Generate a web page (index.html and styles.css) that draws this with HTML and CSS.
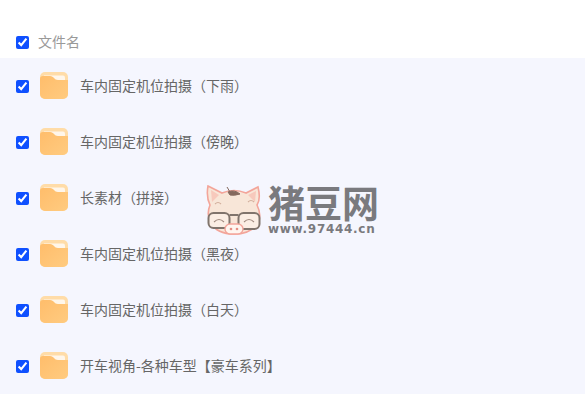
FILE: index.html
```html
<!DOCTYPE html>
<html lang="zh-CN">
<head>
    <meta charset="UTF-8">
    <title>文件列表</title>
    <link rel="stylesheet" href="styles.css">
</head>
<body>
    <svg class="defs" width="0" height="0">
        <defs>
            <linearGradient id="folderBody" x1="0" y1="0" x2="1" y2="1">
                <stop offset="0" stop-color="#ffbd6b"/>
                <stop offset="1" stop-color="#ffcb80"/>
            </linearGradient>
            <symbol id="folder" viewBox="0 0 28 28">
                <rect x="0" y="0" width="28" height="27" rx="5" fill="#ffdca8"/>
                <path d="M4 3.5h19a2 2 0 0 1 2 2V8H4z" fill="#fff6ea"/>
                <path d="M0 7a3 3 0 0 1 3-3h7c2 0 3 1 4 2s2 2 4 2h10v14a5 5 0 0 1-5 5H5a5 5 0 0 1-5-5z" fill="url(#folderBody)"/>
            </symbol>
        </defs>
    </svg>

    <div class="file-table">
        <div class="head-row">
            <input type="checkbox" checked>
            <span class="head-name">文件名</span>
        </div>
        <div class="rows">
            <div class="row">
                <input type="checkbox" checked>
                <svg class="folder-icon"><use href="#folder"/></svg>
                <span class="name">车内固定机位拍摄（下雨）</span>
            </div>
            <div class="row">
                <input type="checkbox" checked>
                <svg class="folder-icon"><use href="#folder"/></svg>
                <span class="name">车内固定机位拍摄（傍晚）</span>
            </div>
            <div class="row">
                <input type="checkbox" checked>
                <svg class="folder-icon"><use href="#folder"/></svg>
                <span class="name">长素材（拼接）</span>
            </div>
            <div class="row">
                <input type="checkbox" checked>
                <svg class="folder-icon"><use href="#folder"/></svg>
                <span class="name">车内固定机位拍摄（黑夜）</span>
            </div>
            <div class="row">
                <input type="checkbox" checked>
                <svg class="folder-icon"><use href="#folder"/></svg>
                <span class="name">车内固定机位拍摄（白天）</span>
            </div>
            <div class="row">
                <input type="checkbox" checked>
                <svg class="folder-icon"><use href="#folder"/></svg>
                <span class="name">开车视角-各种车型【豪车系列】</span>
            </div>
        </div>
    </div>

    <!-- Watermark over the list -->
    <div class="watermark">
        <svg class="pig" viewBox="0 0 58 50" width="58" height="50">
            <path d="M3 1 L17 8 Q29 3 41 8 L53 2 Q56 14 52 20 Q57 30 53 38 Q46 49 29 49 Q12 49 6 38 Q1 30 5 20 Q1 12 3 1z" fill="#f8e6d8" stroke="#f3a59a" stroke-width="1.6"/>
            <path d="M6 5 L14 10 L7 17z" fill="#f7c9bc"/>
            <path d="M51 6 L43 10 L50 17z" fill="#f7c9bc"/>
            <path d="M23 7 Q29 4 35 9 Q29 11 25 10z M25 7 L22 2" fill="#85695e" stroke="#85695e" stroke-width="1"/>
            <path d="M10 19 q3 -3 6 0 M43 17 q3 -3 6 0" fill="none" stroke="#d2ae9c" stroke-width="1.1"/>
            <rect x="3.5" y="28" width="21" height="15" rx="5" fill="#fbeee4" stroke="#80746c" stroke-width="2"/>
            <rect x="33.5" y="28" width="21" height="16" rx="5" fill="#fbeee4" stroke="#80746c" stroke-width="2"/>
            <path d="M24.5 30 H33.5" stroke="#80746c" stroke-width="2"/>
            <path d="M9 37 q5 -5 10 0 M39 37 q5 -5 10 0" fill="none" stroke="#a08a7e" stroke-width="1.1"/>
            <rect x="20" y="39" width="18" height="10" rx="5" fill="#fff6f0" stroke="#f3a59a" stroke-width="1.4"/>
            <circle cx="26" cy="44" r="1.3" fill="#e58f84"/>
            <circle cx="32" cy="44" r="1.3" fill="#e58f84"/>
        </svg>
        <div class="brand">
            <div class="brand-name">猪豆网</div>
            <div class="brand-url">www.97444.cn</div>
        </div>
    </div>
</body>
</html>
```

FILE: styles.css
```css
body {
    font-family: "Noto Sans CJK SC", "Liberation Sans", sans-serif;
    margin: 0;
    background-color: #fff;
    color: #666;
    font-size: 14px;
}
.defs {
    display: block;
    height: 0;
}
input[type="checkbox"] {
    width: 13px;
    height: 13px;
    margin: 0;
    flex: none;
    accent-color: #0f50ff;
}
.file-table {
    padding-top: 27px;
}
.head-row {
    display: flex;
    align-items: center;
    height: 31px;
    padding-left: 16px;
}
.head-name {
    margin-left: 9px;
    padding-bottom: 4px;
    color: #999;
}
.rows {
    background-color: #f5f6fe;
}
.row {
    display: flex;
    align-items: center;
    height: 56px;
    padding-left: 16px;
}
.folder-icon {
    width: 28px;
    height: 28px;
    margin-left: 11px;
    flex: none;
}
.name {
    margin-left: 12px;
    padding-bottom: 2px;
    color: #666;
}
.watermark {
    position: absolute;
    left: 205px;
    top: 182px;
    display: flex;
    gap: 5px;
}
.pig {
    margin-top: 3px;
}
.brand-name {
    font-size: 37px;
    font-weight: 700;
    line-height: 40px;
    color: #7a7a7e;
}
.brand-url {
    font-family: "DejaVu Sans", sans-serif;
    font-size: 12px;
    font-weight: 700;
    line-height: 14px;
    letter-spacing: 0.7px;
    color: #7a7a7e;
}
```
